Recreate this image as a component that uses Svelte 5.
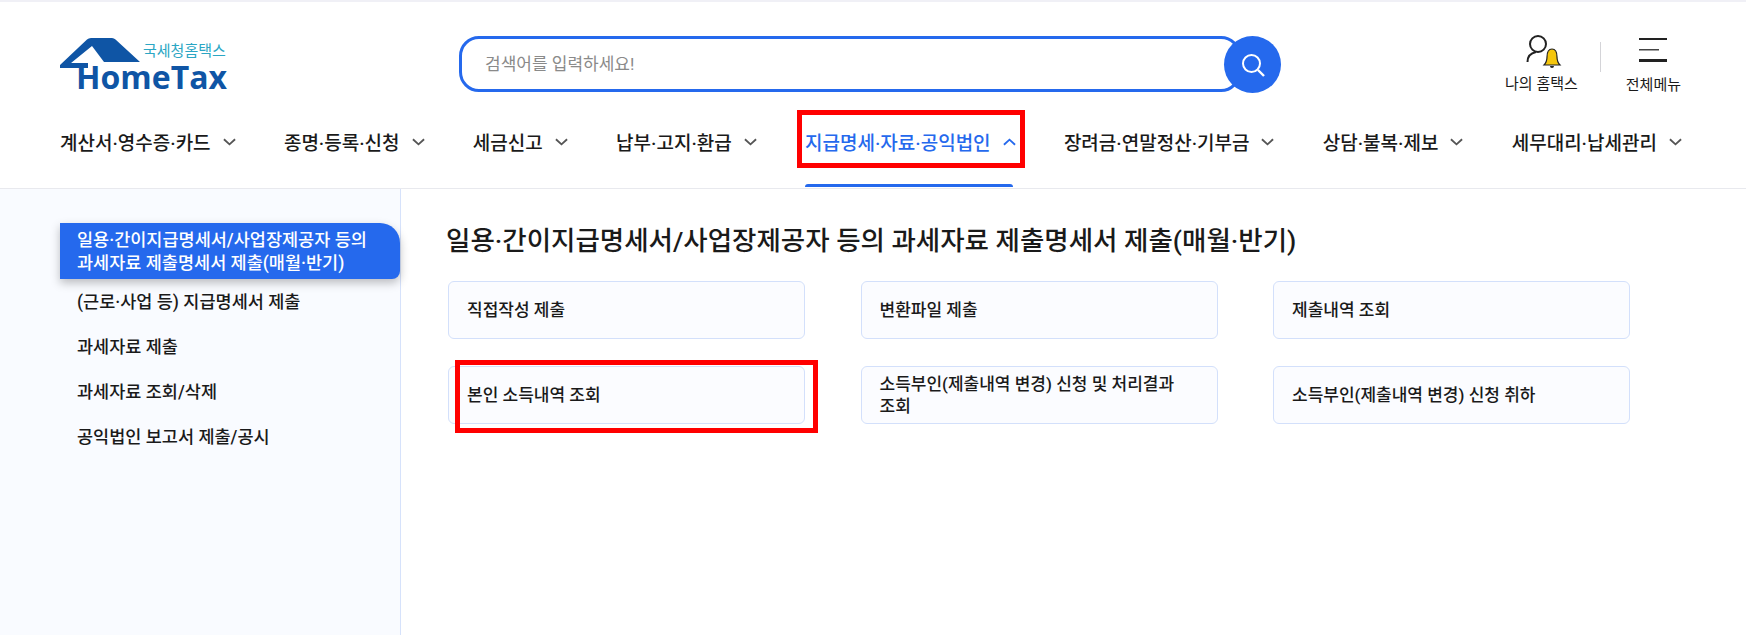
<script>
  const navItems = [
    { label: "계산서·영수증·카드" },
    { label: "종명·등록·신청" },
    { label: "세금신고" },
    { label: "납부·고지·환급" },
    { label: "지급명세·자료·공익법인", active: true },
    { label: "장려금·연말정산·기부금" },
    { label: "상담·불복·제보" },
    { label: "세무대리·납세관리" },
  ];

  const sideItems = [
    { label: "일용·간이지급명세서/사업장제공자 등의 과세자료 제출명세서 제출(매월·반기)", active: true },
    { label: "(근로·사업 등) 지급명세서 제출" },
    { label: "과세자료 제출" },
    { label: "과세자료 조회/삭제" },
    { label: "공익법인 보고서 제출/공시" },
  ];

  const cards = [
    "직접작성 제출",
    "변환파일 제출",
    "제출내역 조회",
    "본인 소득내역 조회",
    "소득부인(제출내역 변경) 신청 및 처리결과 조회",
    "소득부인(제출내역 변경) 신청 취하",
  ];
</script>

<div class="page">
  <header class="header">
    <div class="top">
      <a class="logo" href="#home">
        <svg class="roof" width="90" height="36" viewBox="60 36 90 36">
          <path d="M60 65 L87 39.5 Q88.5 38 91 38 L112 38 Q114 38 115.5 39.5 L140 62 L104 62 L92 46 L71 63 L88 63 L88 68 L60 68 Z" fill="#0f55a5" />
        </svg>
        <span class="logo-sub">국세청홈택스</span>
        <span class="logo-main">HomeTax</span>
      </a>

      <div class="search">
        <div class="search-box">검색어를 입력하세요!</div>
        <button class="search-btn" aria-label="검색">
          <svg width="26" height="26" viewBox="0 0 26 26" fill="none" stroke="#fff" stroke-width="2">
            <circle cx="11.5" cy="11.5" r="8.5" />
            <path d="M18 18 L24 24" stroke-width="2.4" />
          </svg>
        </button>
      </div>

      <div class="utils">
        <div class="util my">
          <svg width="36" height="36" viewBox="0 0 36 36" fill="none">
            <circle cx="12" cy="9" r="8" stroke="#222" stroke-width="2" />
            <path d="M1.5 27 C1.5 21 5 18 10 17" stroke="#222" stroke-width="2" />
            <path d="M26 14 C22 14 21 18 21 22 C21 26 20 28 18 30 L34 30 C32 28 31 26 31 22 C31 18 30 14 26 14 Z" fill="#f5c60d" stroke="#222" stroke-width="1.2" />
            <path d="M24 31 a2 2 0 0 0 4 0 Z" fill="#222" />
          </svg>
          <span>나의 홈택스</span>
        </div>
        <div class="sep"></div>
        <div class="util all">
          <svg width="28" height="26" viewBox="0 0 28 26">
            <rect x="0" y="0" width="28" height="2" fill="#222" />
            <rect x="0" y="11" width="20" height="1.5" fill="#444" />
            <rect x="0" y="21" width="28" height="3" fill="#222" />
          </svg>
          <span>전체메뉴</span>
        </div>
      </div>
    </div>

    <nav class="nav">
      {#each navItems as item}
        <a class="nav-item" class:active={item.active} href="#menu">
          <span>{item.label}</span>
          <svg width="13" height="8" viewBox="0 0 14 8" fill="none" stroke={item.active ? "#2569ed" : "#555"} stroke-width="2">
            {#if item.active}
              <path d="M1 7 L7 1.5 L13 7" />
            {:else}
              <path d="M1 1 L7 6.5 L13 1" />
            {/if}
          </svg>
        </a>
      {/each}
    </nav>
  </header>

  <div class="body">
    <aside class="side">
      {#each sideItems as item}
        <div class="side-item" class:active={item.active}>{item.label}</div>
      {/each}
    </aside>

    <main class="main">
      <h2 class="title">일용·간이지급명세서/사업장제공자 등의 과세자료 제출명세서 제출(매월·반기)</h2>
      <div class="grid">
        {#each cards as card}
          <div class="card">{card}</div>
        {/each}
      </div>
    </main>
  </div>

  <!-- annotation boxes drawn over the page -->
  <div class="mark mark-nav"></div>
  <div class="mark mark-card"></div>
</div>

<style>
  :global(body) {
    margin: 0;
    background: #fff;
  }

  .page {
    position: relative;
    width: 1746px;
    height: 635px;
    overflow: hidden;
    font-family: Roboto, "Noto Sans CJK KR", sans-serif;
    color: #1a1a1a;
    border-top: 2px solid #f0f0f6;
    box-sizing: border-box;
    word-break: keep-all;
  }

  a {
    color: inherit;
    text-decoration: none;
  }

  .header {
    height: 187px;
    box-sizing: border-box;
    border-bottom: 1px solid #e8e9ee;
  }

  .top {
    display: flex;
    height: 100px;
    padding: 34px 65px 0 60px;
    box-sizing: border-box;
  }

  .logo {
    position: relative;
    display: block;
    width: 399px;
    flex: none;
  }

  .roof {
    position: absolute;
    left: 0;
    top: 0;
  }

  .logo-sub {
    position: absolute;
    left: 83px;
    top: 5px;
    font-size: 15px;
    line-height: 20px;
    color: #2ba6c4;
    white-space: nowrap;
  }

  .logo-main {
    position: absolute;
    left: 16px;
    top: 27px;
    font-family: "Open Sans", sans-serif;
    font-weight: 700;
    font-size: 32px;
    line-height: 28px;
    color: #0f55a5;
  }

  .search {
    display: flex;
    width: 822px;
    height: 57px;
    flex: none;
  }

  .search-box {
    width: 782px;
    height: 56px;
    box-sizing: border-box;
    border: 3px solid #2569ed;
    border-radius: 20px;
    padding-left: 23px;
    font-size: 17px;
    line-height: 51px;
    color: #8a8a8a;
    flex: none;
  }

  .search-btn {
    width: 57px;
    height: 57px;
    margin-left: -17px;
    border: 0;
    border-radius: 50%;
    background: #2569ed;
    padding: 0;
    display: flex;
    align-items: center;
    justify-content: center;
    flex: none;
  }

  .utils {
    display: flex;
    margin-left: auto;
    align-items: flex-start;
  }

  .util {
    display: flex;
    flex-direction: column;
    align-items: center;
    font-size: 15px;
    line-height: 20px;
    white-space: nowrap;
  }

  .util svg {
    display: block;
  }

  .util.my svg {
    margin: -1px 0 3px 5px;
  }

  .util.all svg {
    margin: 2px 0 11px;
  }

  .sep {
    width: 1px;
    height: 30px;
    margin: 6px 25px 0 22px;
    background: #d4d4d8;
  }

  .nav {
    display: flex;
    justify-content: space-between;
    padding: 0 64px 0 60px;
    height: 85px;
  }

  .nav-item {
    position: relative;
    display: flex;
    align-items: center;
    gap: 12px;
    height: 85px;
    padding-bottom: 6px;
    box-sizing: border-box;
    font-size: 19px;
    font-weight: 500;
    white-space: nowrap;
  }

  .nav-item.active {
    color: #2569ed;
  }

  .nav-item.active::after {
    content: "";
    position: absolute;
    left: 0;
    right: 3px;
    bottom: 0;
    height: 3px;
    background: #2569ed;
    border-radius: 3px 3px 0 0;
  }

  .body {
    display: flex;
    height: 446px;
  }

  .side {
    width: 401px;
    box-sizing: border-box;
    flex: none;
    padding: 34px 0 0 60px;
    background: #f9fbff;
    border-right: 1px solid #d6e2fb;
  }

  .side-item {
    padding: 0 17px;
    height: 45px;
    line-height: 47px;
    font-size: 17.5px;
    font-weight: 500;
  }

  .side-item.active {
    height: 56px;
    padding-top: 6px;
    padding-right: 20px;
    box-sizing: border-box;
    line-height: 23px;
    color: #fff;
    background: #2569ed;
    border-radius: 0 20px 8px 0;
    box-shadow: 0 4px 10px rgba(0, 0, 0, 0.25);
  }

  .main {
    flex: 1;
    padding: 0 0 0 45px;
  }

  .title {
    margin: 34px 0 22px;
    font-size: 26.5px;
    line-height: 36px;
    font-weight: 500;
    white-space: nowrap;
  }

  .grid {
    display: grid;
    grid-template-columns: repeat(3, 357px);
    column-gap: 55.5px;
    row-gap: 27px;
    margin-left: 2px;
  }

  .card {
    display: flex;
    align-items: center;
    height: 58px;
    box-sizing: border-box;
    padding: 0 35px 0 18px;
    border: 1px solid #d3e0fb;
    border-radius: 6px;
    background: #fbfcff;
    font-size: 17px;
    font-weight: 500;
    line-height: 22px;
  }

  .mark {
    position: absolute;
    border: 5px solid #ff0000;
    box-sizing: border-box;
    pointer-events: none;
  }

  .mark-nav {
    left: 797px;
    top: 108px;
    width: 228px;
    height: 58px;
  }

  .mark-card {
    left: 455px;
    top: 358px;
    width: 363px;
    height: 73px;
  }
</style>
